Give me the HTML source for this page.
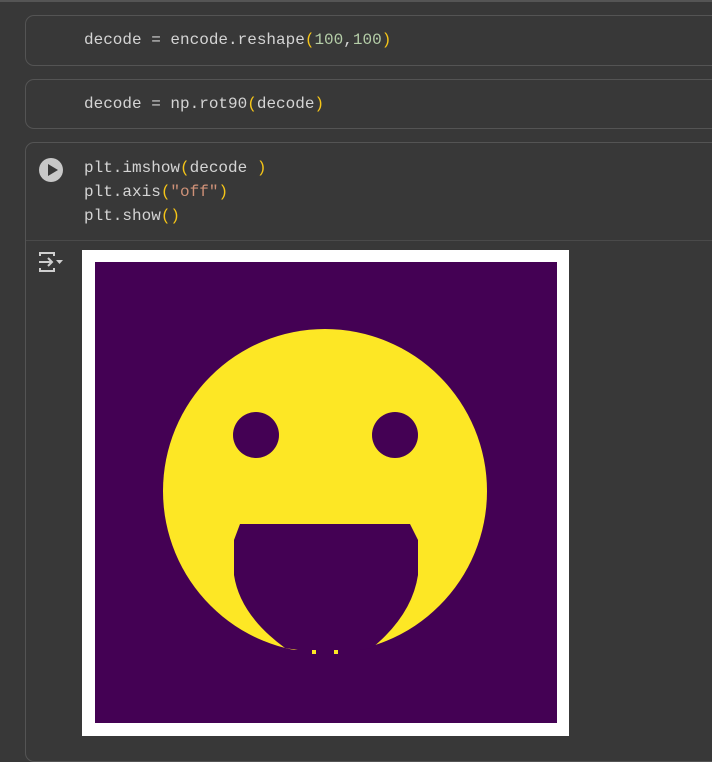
<!DOCTYPE html>
<html><head><style>
body{margin:0;width:712px;height:747px;background:#383838;overflow:hidden;position:relative;font-family:"Liberation Mono",monospace;}
.top{position:absolute;left:0;top:0;width:712px;height:2px;background:#555;}
.cell{position:absolute;left:25px;width:700px;border:1px solid #545454;border-radius:9px;background:#383838;box-sizing:border-box;}
.code{position:absolute;left:58px;font-size:16px;line-height:24px;color:#d4d4d4;white-space:pre;}
.y{color:#f5c518}.n{color:#b5cea8}.s{color:#ce9178}
</style></head><body>
<div class="top"></div>
<div class="cell" style="top:15px;height:51px"><div class="code" style="top:12px">decode = encode.reshape<span class="y">(</span><span class="n">100</span>,<span class="n">100</span><span class="y">)</span></div></div>
<div class="cell" style="top:79px;height:50px"><div class="code" style="top:12px">decode = np.rot90<span class="y">(</span>decode<span class="y">)</span></div></div>
<div class="cell" style="top:142px;height:620px">
<div style="position:absolute;left:13px;top:15px;width:24px;height:24px;border-radius:50%;background:#c8c8c8"></div>
<div style="position:absolute;left:22px;top:21px;width:0;height:0;border-left:10px solid #383838;border-top:6px solid transparent;border-bottom:6px solid transparent"></div>
<div class="code" style="top:13px">plt.imshow<span class="y">(</span>decode <span class="y">)</span>
plt.axis<span class="y">(</span><span class="s">"off"</span><span class="y">)</span>
plt.show<span class="y">()</span></div>
<div style="position:absolute;left:0;top:97px;width:700px;height:1px;background:#4a4a4a"></div>
<svg style="position:absolute;left:11px;top:107px" width="30" height="24" viewBox="0 0 30 24"><g stroke="#cfcfcf" stroke-width="2" fill="none"><path d="M3 6V3h14v3M3 18v3h14v-3M2 12h13M11 8l4 4-4 4"/></g><path d="M19 10h7l-3.5 4z" fill="#cfcfcf"/></svg>
</div>
<svg style="position:absolute;left:82px;top:250px" width="487" height="486" viewBox="82 250 487 486">
<rect x="82" y="250" width="487" height="486" fill="#fff"/>
<rect x="95" y="262" width="462" height="461" fill="#440154"/>
<circle cx="325" cy="491" r="162" fill="#fde725"/>
<circle cx="256" cy="435" r="23" fill="#440154"/>
<circle cx="395" cy="435" r="23" fill="#440154"/>
<path d="M240 524H410L418 540V575Q412 615 372 648L330 655L285 648Q240 615 234 575V540Z" fill="#440154"/>
<rect x="95" y="650" width="462" height="20" fill="#440154"/>
<rect x="312" y="650" width="4" height="4" fill="#fde725"/><rect x="334" y="650" width="4" height="4" fill="#fde725"/>
</svg>
</body></html>
